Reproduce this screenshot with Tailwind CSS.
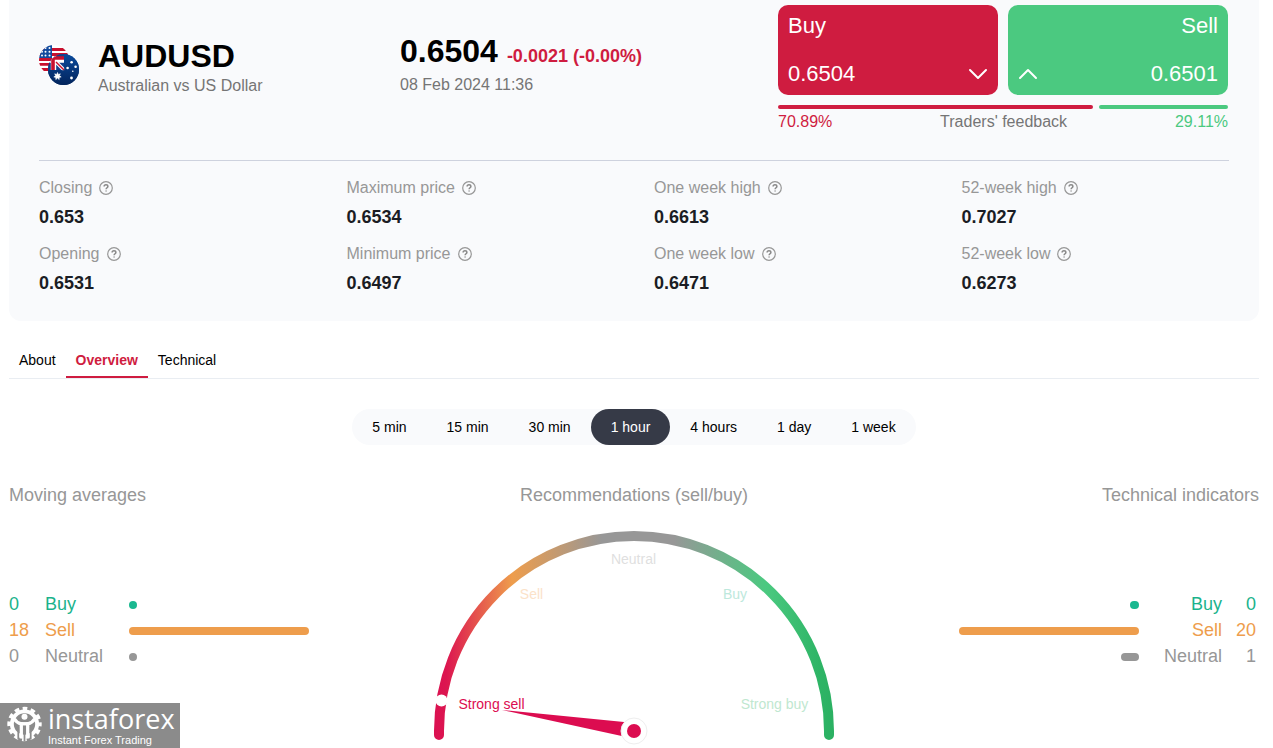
<!DOCTYPE html>
<html lang="en">
<head>
<meta charset="utf-8">
<meta name="viewport" content="width=device-width, initial-scale=1">
<title>AUDUSD</title>
<script src="https://cdn.jsdelivr.net/npm/@tailwindcss/browser@4"></script>
</head>
<body class="relative h-screen overflow-hidden bg-white font-['Liberation_Sans',Arial,sans-serif] text-black">
<svg class="hidden" aria-hidden="true">
  <symbol id="help" viewBox="0 0 14 14">
    <circle cx="7" cy="7" r="6.3" fill="none" stroke="#979797" stroke-width="1.2"/>
    <path d="M5.1 5.6C5.1 4.3 6 3.7 7 3.7s1.9.7 1.9 1.7c0 1.3-1.8 1.4-1.8 2.9M7.1 9.4v1.2" fill="none" stroke="#8a8a8a" stroke-width="1.5"/>
  </symbol>
</svg>
<main class="mr-[14px] ml-[9px]">
  <section class="rounded-b-xl bg-[#f9fafc] px-[30px] pt-[5px] pb-[26px]">
    <div class="flex items-start">
      <div class="flex w-[361px] items-start pt-8">
        <svg class="mt-2 h-10 w-10 shrink-0" viewBox="0 0 40 40" role="img" aria-label="US and Australian flags">
          <defs>
            <clipPath id="us"><circle cx="15" cy="15" r="15"/></clipPath>
            <clipPath id="au"><circle cx="24.500" cy="24.500" r="15.500"/></clipPath>
            <linearGradient id="navy" x1="0" y1="0" x2="0" y2="1"><stop offset="0" stop-color="#0a4a9c"/><stop offset="1" stop-color="#03245c"/></linearGradient>
          </defs>
          <g clip-path="url(#us)">
            <rect width="30" height="30" fill="#fff"/>
            <path d="M0 4.500h30M0 9.500h30M0 14.500h30M0 19.300h30M0 24.500h30" stroke="#c8102e" stroke-width="2.800"/>
            <rect width="13" height="13" fill="#124a9e"/>
            <g fill="#fff"><circle cx="6.500" cy="3" r="1"/><circle cx="10.500" cy="3" r="1"/><circle cx="3" cy="6.700" r="1"/><circle cx="6.500" cy="6.700" r="1"/><circle cx="10.500" cy="6.700" r="1"/><circle cx="3" cy="10.500" r="1"/><circle cx="6.500" cy="10.500" r="1"/><circle cx="10.500" cy="10.500" r="1"/></g>
          </g>
          <g clip-path="url(#au)">
            <rect x="9" y="9" width="31" height="31" fill="url(#navy)"/>
            <path d="M9 9h16v16H9z" fill="#12408c"/>
            <path d="M9 15h16M14.500 9v16" stroke="#fff" stroke-width="5.400"/>
            <path d="M14.500 14.500L26 26" stroke="#fff" stroke-width="3.600"/>
            <path d="M9 13h16M14 9v16" stroke="#c8102e" stroke-width="3.600"/>
            <path d="M17 17l8.500 8.500" stroke="#c8102e" stroke-width="1.400"/>
            <path d="M25.200 9H40v31H9V25.200h16.200z" fill="url(#navy)"/>
            <path d="M18.500 19.500l.8 2 2-.7-.9 1.900 1.800 1.200-2.100.5.1 2.200-1.700-1.500-1.700 1.500.1-2.200-2.100-.5 1.800-1.200-.9-1.900 2 .7z" transform="translate(0 8)" fill="#fff" stroke="#fff" stroke-width=".6"/>
            <g fill="#fff"><circle cx="32.600" cy="17.200" r="1.300"/><circle cx="28.600" cy="23" r="1.300"/><circle cx="36.600" cy="21.800" r="1.300"/><circle cx="33.800" cy="26.300" r=".8"/><circle cx="32.500" cy="33" r="1.400"/></g>
          </g>
        </svg>
        <div class="ml-[19px]">
          <h1 class="text-[32px] leading-[39px] font-bold">AUDUSD</h1>
          <p class="text-base leading-5 text-[#757575]">Australian vs US Dollar</p>
        </div>
      </div>
      <div class="flex-1 pt-[26px]">
        <p class="flex items-baseline gap-[9px] leading-[40px] font-bold"><span class="text-[32px]">0.6504</span><span class="text-lg text-[#cf1c40]">-0.0021 (-0.00%)</span></p>
        <p class="pt-1 text-base leading-5 text-[#757575]">08 Feb 2024 11:36</p>
      </div>
      <div class="mr-px w-[450px]">
        <div class="grid grid-cols-2 gap-[10px] text-[22px] leading-6 text-white">
          <button type="button" class="flex h-[90px] flex-col justify-between rounded-[10px] bg-[#cf1c40] px-[10px] py-[9px] text-left">
            <span>Buy</span>
            <span class="flex w-full items-center justify-between">0.6504
              <svg class="h-3 w-5" viewBox="0 0 20 12" fill="none" stroke="#fff" stroke-width="2" stroke-linecap="round" stroke-linejoin="round" aria-hidden="true"><path d="M2 2l8 8 8-8"/></svg></span>
          </button>
          <button type="button" class="flex h-[90px] flex-col justify-between rounded-[10px] bg-[#4bc980] px-[10px] py-[9px] text-right">
            <span class="w-full">Sell</span>
            <span class="flex w-full items-center justify-between"><svg class="h-3 w-5" viewBox="0 0 20 12" fill="none" stroke="#fff" stroke-width="2" stroke-linecap="round" stroke-linejoin="round" aria-hidden="true"><path d="M2 10l8-8 8 8"/></svg>
              0.6501</span>
          </button>
        </div>
        <div class="mt-[10px] flex gap-[6px]">
          <div class="h-1 rounded-full bg-[#cf1c40]" style="width:70%"></div>
          <div class="h-1 flex-1 rounded-full bg-[#4bc980]"></div>
        </div>
        <div class="mt-[3px] flex justify-between text-base leading-5">
          <span class="text-[#cf1c40]">70.89%</span><span class="text-[#757575]">Traders' feedback</span><span class="text-[#4bc980]">29.11%</span>
        </div>
      </div>
    </div>
    <dl class="mt-[28px] grid grid-cols-4 gap-x-10 gap-y-[13px] border-t border-[#ced2de] pt-[15px] text-base leading-6 text-[#979797]">
      <div><dt class="flex items-center gap-[7px]">Closing <svg class="h-[14px] w-[14px]"><use href="#help"/></svg></dt><dd class="mt-[5px] text-lg leading-6 font-bold text-[#1b1d24]">0.653</dd></div>
      <div><dt class="flex items-center gap-[7px]">Maximum price <svg class="h-[14px] w-[14px]"><use href="#help"/></svg></dt><dd class="mt-[5px] text-lg leading-6 font-bold text-[#1b1d24]">0.6534</dd></div>
      <div><dt class="flex items-center gap-[7px]">One week high <svg class="h-[14px] w-[14px]"><use href="#help"/></svg></dt><dd class="mt-[5px] text-lg leading-6 font-bold text-[#1b1d24]">0.6613</dd></div>
      <div><dt class="flex items-center gap-[7px]">52-week high <svg class="h-[14px] w-[14px]"><use href="#help"/></svg></dt><dd class="mt-[5px] text-lg leading-6 font-bold text-[#1b1d24]">0.7027</dd></div>
      <div><dt class="flex items-center gap-[7px]">Opening <svg class="h-[14px] w-[14px]"><use href="#help"/></svg></dt><dd class="mt-[5px] text-lg leading-6 font-bold text-[#1b1d24]">0.6531</dd></div>
      <div><dt class="flex items-center gap-[7px]">Minimum price <svg class="h-[14px] w-[14px]"><use href="#help"/></svg></dt><dd class="mt-[5px] text-lg leading-6 font-bold text-[#1b1d24]">0.6497</dd></div>
      <div><dt class="flex items-center gap-[7px]">One week low <svg class="h-[14px] w-[14px]"><use href="#help"/></svg></dt><dd class="mt-[5px] text-lg leading-6 font-bold text-[#1b1d24]">0.6471</dd></div>
      <div><dt class="flex items-center gap-[7px]">52-week low <svg class="h-[14px] w-[14px]"><use href="#help"/></svg></dt><dd class="mt-[5px] text-lg leading-6 font-bold text-[#1b1d24]">0.6273</dd></div>
    </dl>
  </section>

  <nav class="mt-[23px] flex border-b border-[#e9edf2] text-sm leading-8">
    <a href="#about" class="border-b-2 border-transparent px-[10px]">About</a>
    <a href="#overview" aria-current="page" class="border-b-2 border-[#cf1c40] px-[10px] font-bold text-[#cf1c40]">Overview</a>
    <a href="#technical" class="border-b-2 border-transparent px-[10px]">Technical</a>
  </nav>

  <div class="mt-[30px] flex justify-center">
    <div class="flex rounded-full bg-[#f9fafc] text-sm leading-9">
      <button type="button" class="px-5">5 min</button>
      <button type="button" class="px-5">15 min</button>
      <button type="button" class="px-5">30 min</button>
      <button type="button" aria-pressed="true" class="rounded-full bg-[#363a47] px-5 text-white">1 hour</button>
      <button type="button" class="px-5">4 hours</button>
      <button type="button" class="px-5">1 day</button>
      <button type="button" class="px-5">1 week</button>
    </div>
  </div>

  <div class="mt-[38px] grid grid-cols-[1fr_auto_1fr] text-lg text-[#979797]">
    <section>
      <h2 class="leading-6">Moving averages</h2>
      <ul class="mt-[84px] leading-[26px]">
        <li class="flex items-center text-[#1ab38c]"><span class="w-[36px]">0</span><span class="w-[84px]">Buy</span><span class="mt-0.5 h-2 w-2 rounded-full bg-[#1ab890]"></span></li>
        <li class="flex items-center text-[#ee9d4c]"><span class="w-[36px]">18</span><span class="w-[84px]">Sell</span><span class="mt-0.5 h-2 w-[180px] rounded-full bg-[#ee9d4c]"></span></li>
        <li class="flex items-center"><span class="w-[36px]">0</span><span class="w-[84px]">Neutral</span><span class="mt-0.5 h-2 w-2 rounded-full bg-[#979797]"></span></li>
      </ul>
    </section>
    <section class="flex flex-col items-center">
      <h2 class="leading-6">Recommendations (sell/buy)</h2>
      <svg class="mt-[24px] h-[217px] w-[400px]" viewBox="0 0 400 217" role="img" aria-label="Recommendation: strong sell" font-size="14" text-anchor="middle">
        <defs>
          <linearGradient id="scale" gradientUnits="userSpaceOnUse" x1="0" y1="0" x2="400" y2="0">
            <stop offset="0" stop-color="#db1151"/><stop offset=".03" stop-color="#dc1550"/><stop offset=".11" stop-color="#e5564d"/><stop offset=".195" stop-color="#ee9d4c"/><stop offset=".42" stop-color="#979797"/><stop offset=".6" stop-color="#979797"/><stop offset=".83" stop-color="#4bc980"/><stop offset=".96" stop-color="#2eb566"/><stop offset="1" stop-color="#2bb062"/>
          </linearGradient>
        </defs>
        <path d="M5 204v-4a195 195 0 0 1 390 0v4" fill="none" stroke="url(#scale)" stroke-width="10" stroke-linecap="round"/>
        <circle cx="7.500" cy="169.500" r="6" fill="#fff"/>
        <text x="199.500" y="33" fill="#dfdfdf">Neutral</text>
        <text x="97.500" y="68" fill="#fbe2c9">Sell</text>
        <text x="301" y="68" fill="#bde8dc">Buy</text>
        <text x="57.500" y="178" fill="#dc0c50">Strong sell</text>
        <text x="340.500" y="178" fill="#bfe7d0">Strong buy</text>
        <path d="M68 179L190 191v14.500z" fill="#dc0c50"/>
        <circle cx="200" cy="200" r="13" fill="#fff" stroke="#eee" stroke-width="1"/>
        <circle cx="200" cy="200" r="7" fill="#dc0c50"/>
      </svg>
    </section>
    <section class="text-right">
      <h2 class="leading-6">Technical indicators</h2>
      <ul class="mt-[84px] pr-[3px] leading-[26px]">
        <li class="flex items-center justify-end text-[#1ab38c]"><span class="mt-0.5 h-2 w-[9px] rounded-full bg-[#1ab890]"></span><span class="w-[83px]">Buy</span><span class="w-[34px]">0</span></li>
        <li class="flex items-center justify-end text-[#ee9d4c]"><span class="mt-0.5 h-2 w-[180px] rounded-full bg-[#ee9d4c]"></span><span class="w-[83px]">Sell</span><span class="w-[34px]">20</span></li>
        <li class="flex items-center justify-end"><span class="mt-0.5 h-2 w-[18px] rounded-full bg-[#979797]"></span><span class="w-[83px]">Neutral</span><span class="w-[34px]">1</span></li>
      </ul>
    </section>
  </div>
</main>

<div class="absolute bottom-0 left-0 flex h-[45px] w-[180px] items-start gap-[6px] bg-[#8b8b8b] pl-[7px] text-white">
  <svg class="mt-[3px] h-9 w-[35px] shrink-0" viewBox="0 0 36 36" aria-hidden="true">
    <circle cx="18" cy="18" r="13" fill="none" stroke="#fff" stroke-width="4"/>
    <circle cx="18" cy="18" r="15.900" fill="none" stroke="#fff" stroke-width="3.600" stroke-dasharray="4.800 3.525" stroke-dashoffset="2.400"/>
    <circle cx="18" cy="10.500" r="3.100" fill="#fff"/>
    <path d="M7.500 12.500c2 3.800 4.500 4.700 7.200 5.300V33M28.500 12.500c-2 3.800-4.500 4.700-7.200 5.300V33" fill="none" stroke="#fff" stroke-width="3.400"/>
    <path d="M14 16h8v3.500h-8z" fill="#fff"/>
    <path d="M18 20v16M11.600 21v13M24.400 21v13" stroke="#8b8b8b" stroke-width="1.800"/>
  </svg>
  <div>
    <p class="font-['Open_Sans','Noto_Sans',sans-serif] text-[27px] leading-8">instaforex</p>
    <p class="text-[11px] leading-[11px]">Instant Forex Trading</p>
  </div>
</div>
</body>
</html>
